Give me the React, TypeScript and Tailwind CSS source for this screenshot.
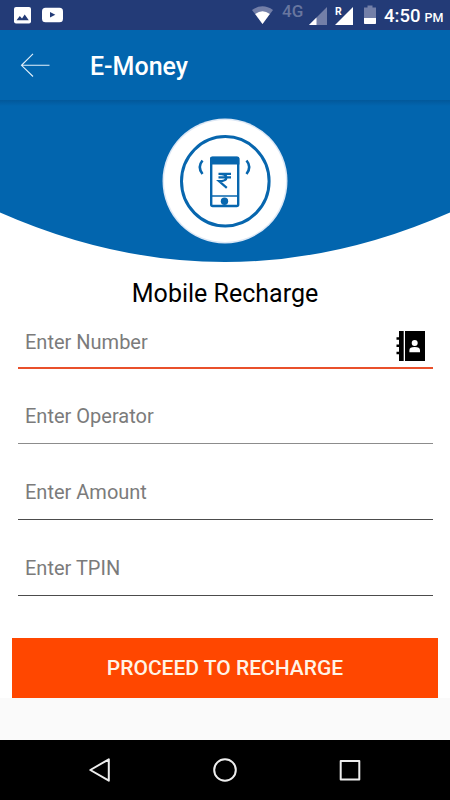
import React from 'react'

const fields = [
	{ name: 'number', label: 'Enter Number', row: 'h-[68px] pb-[13px] border-b-2 border-[#e9502b]', contacts: true },
	{ name: 'operator', label: 'Enter Operator', row: 'h-[75px] pb-[15px] border-b border-[#8c8c8c]' },
	{ name: 'amount', label: 'Enter Amount', row: 'h-[76px] pb-[15px] border-b border-[#4c4c4c]' },
	{ name: 'tpin', label: 'Enter TPIN', row: 'h-[76px] pb-[15px] border-b border-[#4c4c4c]' }
]

function StatusBar() {
	return (
		<div className="flex h-[30px] items-start bg-[#233b77] text-white">
			<svg className="mt-[7px] ml-[14px] shrink-0" width="17" height="17" viewBox="0 0 17 17">
				<rect width="17" height="16.5" rx="2" fill="#fff" />
				<path d="M2.5 13.2l3.3-4.3 2.2 2.7 2.7-4L14.8 13.2z" fill="#233b77" />
			</svg>
			<svg className="mt-[7px] ml-[11px] shrink-0" width="21" height="16" viewBox="0 0 21 16">
				<rect y=".7" width="21" height="14.6" rx="3.5" fill="#fff" />
				<path d="M8 5v5.6L13.3 7.8z" fill="#233b77" />
			</svg>
			<svg className="mt-[5px] ml-[188px] shrink-0" width="23" height="20" viewBox="0 0 23 20">
				<path d="M1 5Q11.5-2.5 22 5L11.5 19z" fill="#737fa8" />
				<path d="M4.2 9Q11.5 3.3 18.8 9L11.5 19z" fill="#fff" />
			</svg>
			<span className="mt-[3px] ml-[8px] w-[22px] text-[17px] leading-[17px] font-medium text-[#68769f]">4G</span>
			<svg className="mt-[7px] ml-[5px] shrink-0" width="18" height="18" viewBox="0 0 18 18">
				<path d="M18 0v18H0z" fill="#737fa8" />
				<path d="M7.5 10.5V18H0z" fill="#fff" />
			</svg>
			<div className="relative mt-[7px] ml-[8px] h-[18px] w-[18px] shrink-0">
				<svg width="18" height="18" viewBox="0 0 18 18">
					<path d="M18 0v18H0z" fill="#fff" />
				</svg>
				<span className="absolute top-0 left-0 text-[10.5px] leading-[9px] font-bold">R</span>
			</div>
			<svg className="mt-[5px] ml-[11px] shrink-0" width="12" height="19" viewBox="0 0 12 19">
				<path d="M3.5 .5h5v2H12v11H0v-11h3.5z" fill="#737fa8" />
				<path d="M0 13h12v5.2a.8.8 0 0 1-.8.8H.8a.8.8 0 0 1-.8-.8z" fill="#fff" />
			</svg>
			<div className="ml-[8px] flex items-baseline font-medium whitespace-nowrap">
				<span className="text-[18.5px] leading-[32px]">4:50</span>
				<span className="ml-[4px] text-[12.5px]">PM</span>
			</div>
		</div>
	)
}

function PhoneBadge() {
	return (
		<svg width="126" height="126" viewBox="0 0 126 126">
			<circle cx="63" cy="63" r="62.5" fill="#dce7f5" />
			<circle cx="63" cy="63" r="61" fill="#fff" />
			<g fill="none" stroke="#0766ae">
				<ellipse cx="63.3" cy="63.3" rx="43.8" ry="44.7" strokeWidth="3" />
				<path d="M40.5 42.5q-5.5 6.5 0 13.5M84.5 42.5q5.5 6.5 0 13.5" strokeWidth="2.6" />
				<rect x="49.2" y="40" width="27" height="48" rx="1.5" strokeWidth="2.4" />
				<path d="M49 78h27.5" strokeWidth="1.5" />
				<path d="M56.5 55.8h12.5M56.5 59.3h12.5M57 55.8c10 0 10 7.3 0 7.3l7.8 6.7" strokeWidth="2.2" />
			</g>
			<path d="M48 40.5a2 2 0 0 1 2-2h25.4a2 2 0 0 1 2 2V46.5H48z" fill="#0766ae" />
			<circle cx="62.5" cy="83.3" r="3.7" fill="#0766ae" />
		</svg>
	)
}

function ContactsIcon() {
	return (
		<svg width="30" height="31" viewBox="0 0 30 31">
			<path d="M3 0h4.7v30H3zM9 0h20v30H9z" fill="#000" />
			<path d="M.5 7.5H4M.5 14.7H4M.5 22H4" stroke="#000" strokeWidth="2.5" />
			<circle cx="18.7" cy="12" r="3" fill="#fff" />
			<path d="M13.4 21.3v-2q0-3.3 5.3-3.3t5.3 3.3v2z" fill="#fff" />
		</svg>
	)
}

function NavBar() {
	return (
		<nav className="flex h-[60px] items-center justify-center gap-[101px] bg-black">
			<svg width="24" height="24" viewBox="0 0 24 24" fill="none" stroke="#eee" strokeWidth="2" strokeLinejoin="round">
				<path d="M20.8 1.3v21.4L2.3 12z" />
			</svg>
			<svg width="24" height="24" viewBox="0 0 24 24" fill="none" stroke="#eee" strokeWidth="2">
				<circle cx="12" cy="12" r="10.8" />
			</svg>
			<svg width="24" height="24" viewBox="0 0 24 24" fill="none" stroke="#eee" strokeWidth="2" strokeLinejoin="round">
				<path d="M2.7 2.9h18.6v18.6H2.7z" />
			</svg>
		</nav>
	)
}

export default function App() {
	return (
		<div className="flex h-[800px] w-[450px] flex-col overflow-hidden bg-[#fafafa] font-[Roboto,sans-serif]">
			<StatusBar />
			<header className="flex h-[70px] items-center bg-[#0265ae] text-white">
				<button aria-label="Back" className="ml-[20px]">
					<svg width="31" height="24" viewBox="0 0 31 24" fill="none" stroke="#e3f1fb" strokeWidth="1.1">
						<path d="M13 .8L1.5 12.3 13 23.5M1.5 12.3h28" />
					</svg>
				</button>
				<h1 className="mt-[4px] ml-[39px] text-[25px] leading-[30px] font-medium">E-Money</h1>
			</header>
			<main className="h-[598px] bg-white">
				<div className="grid h-[162px] justify-items-center">
					<svg className="col-start-1 row-start-1" width="450" height="162" viewBox="0 0 450 162">
						<defs>
							<linearGradient id="bar-shadow" x2="0" y2="1">
								<stop stopColor="#02589a" />
								<stop offset="1" stopColor="#0265ae" />
							</linearGradient>
						</defs>
						<path d="M0 0h450v112.5Q225 211.5 0 112.5z" fill="#0265ae" />
						<path d="M0 0h450v6H0z" fill="url(#bar-shadow)" />
					</svg>
					<div className="col-start-1 row-start-1 mt-[18px]">
						<PhoneBadge />
					</div>
				</div>
				<form>
					<h2 className="mt-[16px] h-[23px] text-center text-[25px] leading-[32px] text-black">Mobile Recharge</h2>
					<div className="mx-[17.5px]">
						{fields.map(field => (
							<div key={field.name} className={`flex items-end justify-between pr-[7px] pl-[7.5px] ${field.row}`}>
								<input
									name={field.name}
									placeholder={field.label}
									className="h-[24px] w-[300px] bg-transparent text-[20px] leading-[24px] outline-none placeholder:text-[#7b7b7b]"
								/>
								{field.contacts && (
									<span className="-mb-[8px]">
										<ContactsIcon />
									</span>
								)}
							</div>
						))}
					</div>
					<button
						type="button"
						className="mx-[12px] mt-[42px] block h-[60px] w-[426px] bg-[#ff4700] pt-px text-[21px] font-medium text-[#fff3e6]"
					>
						PROCEED TO RECHARGE
					</button>
				</form>
			</main>
			<div className="flex-1" />
			<NavBar />
		</div>
	)
}
